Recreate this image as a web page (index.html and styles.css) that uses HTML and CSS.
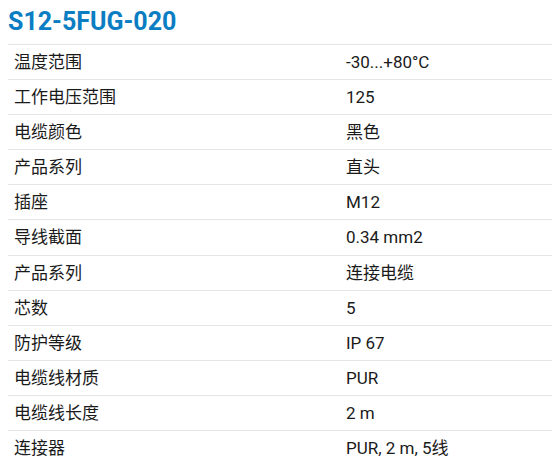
FILE: index.html
```html
<!DOCTYPE html>
<html lang="zh">
<head>
<meta charset="utf-8">
<link rel="stylesheet" href="styles.css">
</head>
<body>
<h1 class="title">S12-5FUG-020</h1>
<table class="specs">
<tbody>
<tr><td>温度范围</td><td>-30...+80°C</td></tr>
<tr><td>工作电压范围</td><td>125</td></tr>
<tr><td>电缆颜色</td><td>黑色</td></tr>
<tr><td>产品系列</td><td>直头</td></tr>
<tr><td>插座</td><td>M12</td></tr>
<tr><td>导线截面</td><td>0.34 mm2</td></tr>
<tr><td>产品系列</td><td>连接电缆</td></tr>
<tr><td>芯数</td><td>5</td></tr>
<tr><td>防护等级</td><td>IP 67</td></tr>
<tr><td>电缆线材质</td><td>PUR</td></tr>
<tr><td>电缆线长度</td><td>2 m</td></tr>
<tr><td>连接器</td><td>PUR, 2 m, 5线</td></tr>
</tbody>
</table>
</body>
</html>
```

FILE: styles.css
```css
html, body {
  margin: 0;
  padding: 0;
  background: #ffffff;
}
body {
  padding: 8px 0 0 8px;
  font-family: Roboto, "Noto Sans CJK SC", sans-serif;
  color: #1a1a1a;
  overflow: hidden;
}
.title {
  margin: 0 0 8px 0;
  font-size: 25px;
  line-height: 28px;
  font-weight: 700;
  color: #0b7dc2;
}
.specs {
  width: 544px;
  border-collapse: collapse;
  font-size: 17px;
  line-height: 20px;
}
.specs td {
  border-top: 1px solid #e6e6e6;
  padding: 7px 6px 7.1px 6px;
  vertical-align: top;
}
.specs td:first-child {
  width: 320px;
}
```
